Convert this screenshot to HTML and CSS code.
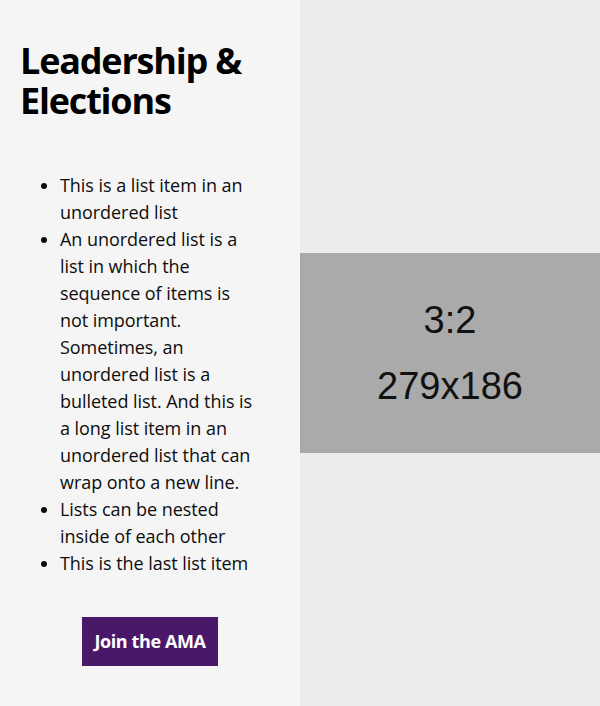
FILE: index.html
```html
<!DOCTYPE html>
<html lang="en">
<head>
<meta charset="utf-8">
<title>Leadership &amp; Elections</title>
<link rel="stylesheet" href="styles.css">
</head>
<body>
<div class="layout">
  <section class="content">
    <h2 class="title">Leadership &amp; Elections</h2>
    <ul class="list">
      <li>This is a list item in an unordered list</li>
      <li>An unordered list is a list in which the sequence of items is not important. Sometimes, an unordered list is a bulleted list. And this is a long list item in an unordered list that can wrap onto a new line.</li>
      <li>Lists can be nested inside of each other</li>
      <li>This is the last list item</li>
    </ul>
    <div class="actions">
      <a class="button" href="#">Join the AMA</a>
    </div>
  </section>
  <section class="media">
    <div class="placeholder">
      <span class="ratio">3:2</span>
      <span class="size">279x186</span>
    </div>
  </section>
</div>
</body>
</html>
```
FILE: styles.css
```css
* { box-sizing: border-box; }
html, body { margin: 0; padding: 0; }
body {
  font-family: "Open Sans", "Liberation Sans", sans-serif;
  color: #111;
  width: 600px;
  height: 706px;
}
.layout {
  display: grid;
  grid-template-columns: 300px 300px;
  height: 706px;
}
.content {
  background: #f5f5f5;
  padding: 41px 20px 0 20px;
}
.title {
  margin: 0;
  font-size: 36px;
  line-height: 40px;
  font-weight: 700;
  color: #000;
  letter-spacing: -1.2px;
}
.list {
  margin: 51px 0 0 0;
  padding: 0 22px 0 40px;
  font-size: 18px;
  line-height: 27px;
  letter-spacing: -0.05px;
  color: #0d0d0d;
}
.actions {
  display: flex;
  justify-content: center;
  margin-top: 40px;
}
.button {
  display: inline-block;
  width: 136px;
  height: 49px;
  line-height: 49px;
  text-align: center;
  background: #4a1868;
  color: #fff;
  font-weight: 700;
  font-size: 18px;
  letter-spacing: -0.4px;
  text-decoration: none;
}
.media {
  background: #ececec;
  display: flex;
  align-items: center;
}
.placeholder {
  width: 300px;
  height: 200px;
  background: #aaaaaa;
  display: flex;
  flex-direction: column;
  align-items: center;
  justify-content: center;
  font-family: "Liberation Sans", Arial, sans-serif;
  font-size: 38px;
  line-height: 66px;
  color: #111;
}
```
